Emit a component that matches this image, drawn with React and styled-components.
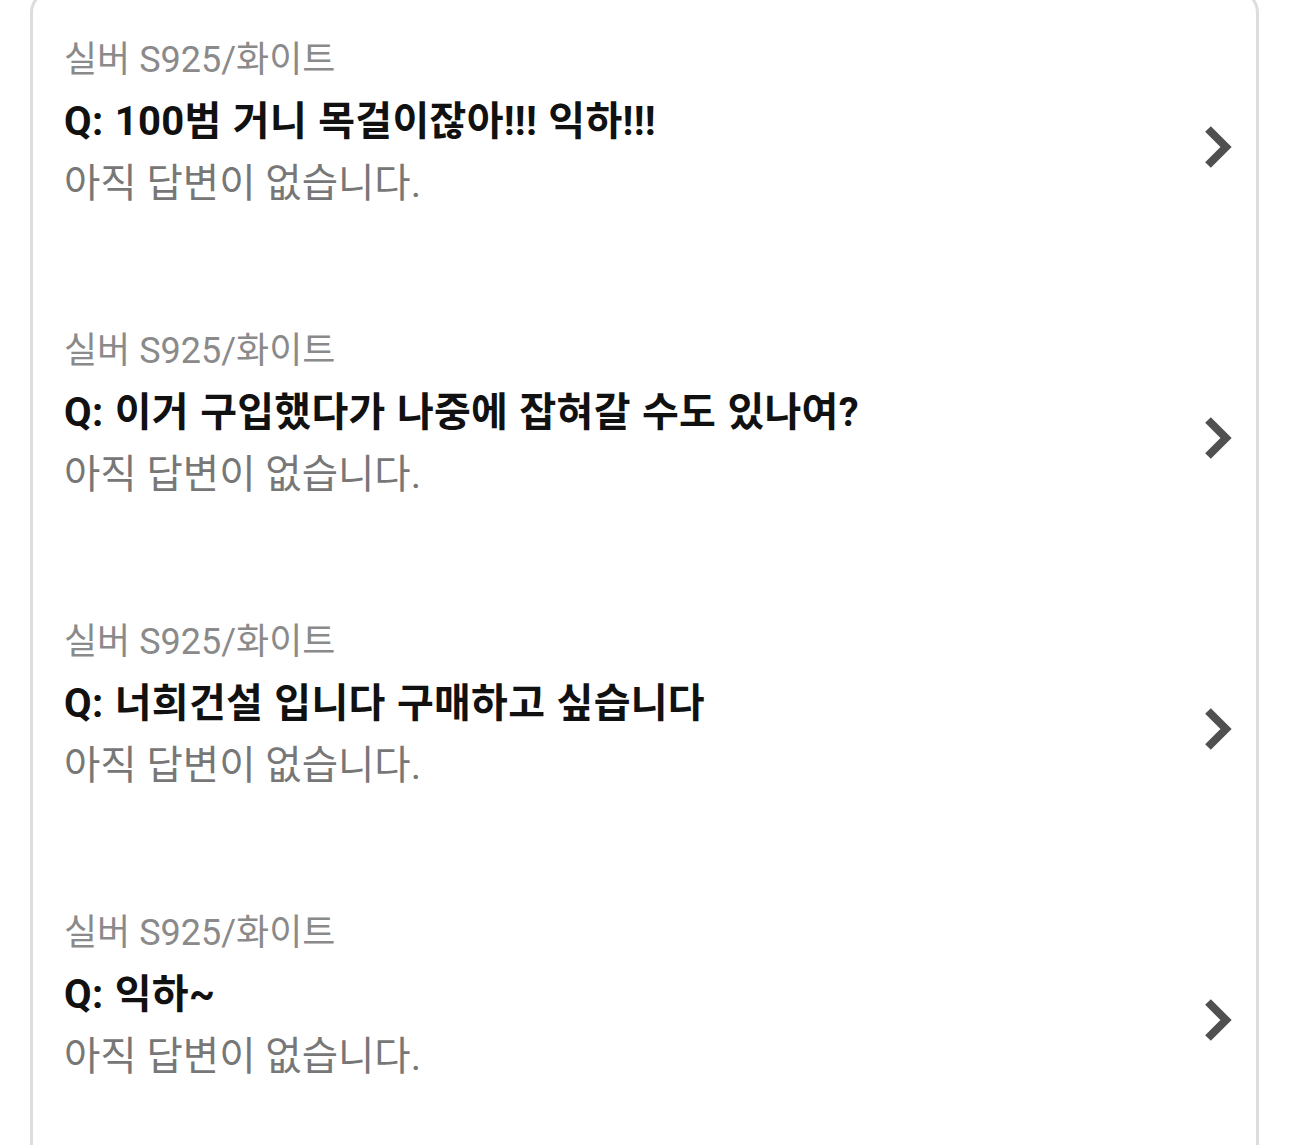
import styled, { createGlobalStyle } from "styled-components";

const GlobalStyle = createGlobalStyle`
  body {
    margin: 0;
    background: #fff;
    font-family: "Roboto", "Noto Sans CJK KR", sans-serif;
    overflow: hidden;
  }
`;

const Card = styled.section`
  margin: -11px 31px 0 30px;
  border: 3px solid #dddddd;
  border-radius: 24px;
  background: #fff;
  padding: 12px 23px 0 31px;
`;

const Item = styled.a`
  display: flex;
  align-items: center;
  height: 291px;
  text-decoration: none;
`;

const Body = styled.div`
  flex: 1;
  align-self: flex-start;
  padding-top: 25px;
`;

const Option = styled.p`
  margin: 0;
  font-size: 36px;
  line-height: 62px;
  color: #8a8a8a;
`;

const Question = styled.p`
  margin: 0;
  font-size: 40px;
  font-weight: 700;
  line-height: 62px;
  letter-spacing: 0.3px;
  word-spacing: 1px;
  color: #111;
`;

const Answer = styled.p`
  margin: 0;
  font-size: 39.5px;
  line-height: 62px;
  color: #777;
`;

const ChevronIcon = styled.svg`
  flex: none;
  margin-bottom: 6px;
`;

const Chevron = () => (
  <ChevronIcon width="30" height="44" viewBox="0 0 30 44">
    <polyline
      points="5,4 23,22 5,40"
      fill="none"
      stroke="#505050"
      strokeWidth="8"
    />
  </ChevronIcon>
);

const questions = [
  "100범 거니 목걸이잖아!!! 익하!!!",
  "이거 구입했다가 나중에 잡혀갈 수도 있나여?",
  "너희건설 입니다 구매하고 싶습니다",
  "익하~",
];

export default function App() {
  return (
    <>
      <GlobalStyle />
      <Card>
        {questions.map((q, i) => (
          <Item key={i} href="#">
            <Body>
              <Option>실버 S925/화이트</Option>
              <Question>Q: {q}</Question>
              <Answer>아직 답변이 없습니다.</Answer>
            </Body>
            <Chevron />
          </Item>
        ))}
      </Card>
    </>
  );
}
